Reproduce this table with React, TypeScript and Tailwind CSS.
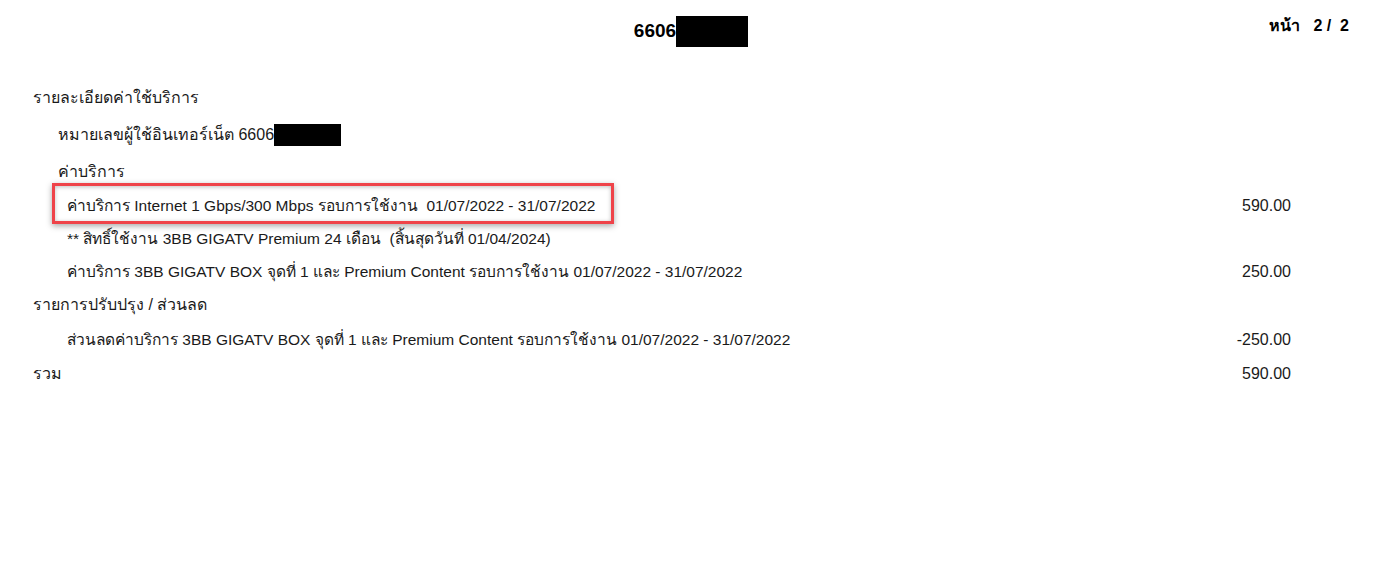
const FONT = "font-['Liberation_Sans','Noto_Sans','DejaVu_Sans',sans-serif]";

type Line = {
  text: React.ReactNode;
  level?: 0 | 1 | 2;
  amount?: string;
  h: string;
};

function Redacted({ w, h }: { w: string; h: string }) {
  return <span className={`inline-block bg-black align-middle ${w} ${h}`} />;
}

const lines: Line[] = [
  { text: "รายละเอียดค่าใช้บริการ", h: "h-[35px]" },
  {
    text: (
      <span className="flex items-center">
        หมายเลขผู้ใช้อินเทอร์เน็ต 6606
        <Redacted w="w-[67px]" h="h-[22px]" />
      </span>
    ),
    level: 1,
    h: "h-[39px]",
  },
  { text: "ค่าบริการ", level: 1, h: "h-[35px]" },
  {
    text: (
      <span className="relative">
        ค่าบริการ Internet 1 Gbps/300 Mbps รอบการใช้งาน&nbsp; 01/07/2022 - 31/07/2022
        <span className="pointer-events-none absolute -top-[14px] -bottom-[10px] -left-[15px] -right-[19px] border-[3px] border-[#ef4349] shadow-[0_2px_6px_rgba(0,0,0,0.35),inset_0_1px_4px_rgba(0,0,0,0.25)]" />
      </span>
    ),
    level: 2,
    amount: "590.00",
    h: "h-[34px]",
  },
  {
    text: "** สิทธิ์ใช้งาน 3BB GIGATV Premium 24 เดือน\u00a0 (สิ้นสุดวันที่ 01/04/2024)",
    level: 2,
    h: "h-[32px]",
  },
  {
    text: "ค่าบริการ 3BB GIGATV BOX จุดที่ 1 และ Premium Content รอบการใช้งาน 01/07/2022 - 31/07/2022",
    level: 2,
    amount: "250.00",
    h: "h-[33px]",
  },
  { text: "รายการปรับปรุง / ส่วนลด", h: "h-[34px]" },
  {
    text: "ส่วนลดค่าบริการ 3BB GIGATV BOX จุดที่ 1 และ Premium Content รอบการใช้งาน 01/07/2022 - 31/07/2022",
    level: 2,
    amount: "-250.00",
    h: "h-[35px]",
  },
  { text: "รวม", amount: "590.00", h: "h-[34px]" },
];

const indent = ["", "pl-[25px]", "pl-[34px] text-[15.5px]"];

export default function App() {
  return (
    <div className={`h-[564px] w-[1389px] overflow-hidden bg-white text-[#1a1a1a] ${FONT}`}>
      <header className="relative flex h-[80px] justify-center pt-[16px]">
        <div className="ml-[-7px] flex h-[31px] items-center text-[19px] font-bold text-black">
          6606
          <span className="inline-block h-[31px] w-[72px] bg-black" />
        </div>
        <div className="absolute right-[40px] top-[14px] text-[16px] font-bold text-black">
          หน้า&nbsp;&nbsp; 2 /&nbsp; 2
        </div>
      </header>

      <main className="pl-[33px] pr-[98px] text-[16px]">
        {lines.map((l, i) => (
          <div key={i} className={`flex items-center justify-between ${l.h}`}>
            <div className={indent[l.level ?? 0]}>{l.text}</div>
            {l.amount && <div className="text-right">{l.amount}</div>}
          </div>
        ))}
      </main>
    </div>
  );
}
